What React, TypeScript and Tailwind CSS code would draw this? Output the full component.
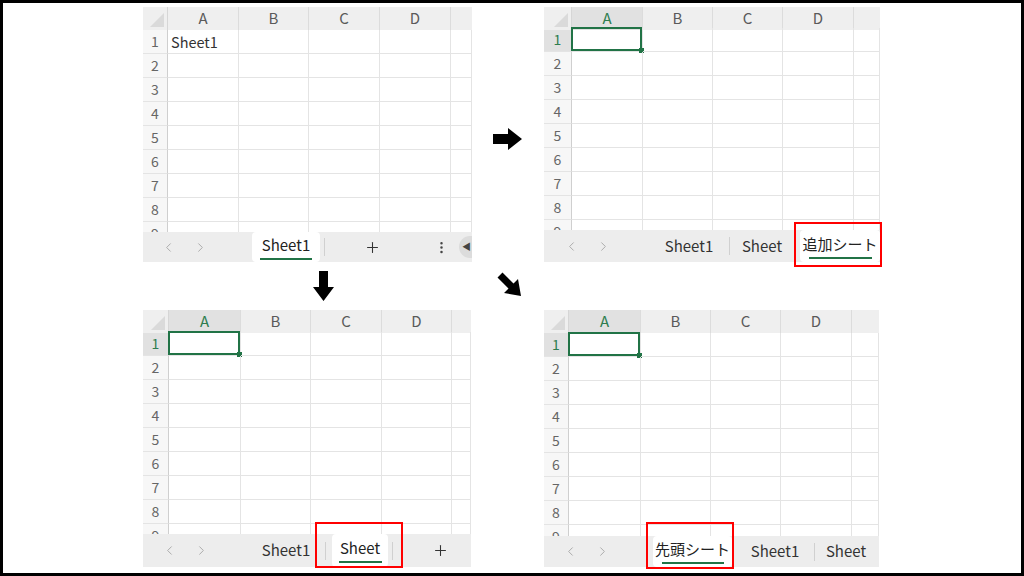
import React from 'react'
import { ChevronLeft, ChevronRight, Plus, EllipsisVertical } from 'lucide-react'

const GREEN = 'bg-[#217346]'

function Corner() {
  return (
    <div className="relative bg-[#efefef] border-r border-[#d6d6d6]">
      <svg className="absolute right-[3px] bottom-[3px]" width="14" height="14" viewBox="0 0 14 14">
        <polygon points="14,0 14,14 0,14" fill="#dadada" />
      </svg>
    </div>
  )
}

function Panel(props: {
  box: string
  cols: string
  headH: string
  gridH: string
  barH: string
  selected?: boolean
  a1?: string
  bar: React.ReactNode
  red?: string
}) {
  const { box, cols, headH, gridH, barH, selected, a1, bar, red } = props
  const letters = ['A', 'B', 'C', 'D']
  const rows = [1, 2, 3, 4, 5, 6, 7, 8, 9]

  return (
    <div className={`relative shrink-0 ${box}`}>
      <div className="flex flex-col w-full h-full overflow-hidden bg-white">
        <div className={`${gridH} overflow-hidden`}>
          <div className={`grid ${cols} ${headH} border-b border-[#d4d4d4]`}>
            <Corner />
            {letters.map((l, i) => (
              <div
                key={l}
                className={`flex items-center justify-center text-[15px] border-r border-[#dcdcdc] ${
                  selected && i === 0 ? 'bg-[#e1e1e1] text-[#2e7d4f]' : 'bg-[#efefef] text-[#5a5a5a]'
                }`}
              >
                {l}
              </div>
            ))}
            <div className="bg-[#efefef]" />
          </div>
          {rows.map((r) => (
            <div key={r} className={`grid ${cols} h-[24px]`}>
              <div
                className={`flex items-center justify-center text-[14px] border-r border-b border-r-[#cfcfcf] border-b-[#e4e4e4] ${
                  selected && r === 1 ? 'bg-[#e1e1e1] text-[#2e7d4f]' : 'bg-[#f7f7f7] text-[#666666]'
                }`}
              >
                {r}
              </div>
              {[0, 1, 2, 3, 4].map((c) => (
                <div key={c} className="relative border-r border-b border-[#e4e4e4] flex items-center">
                  {r === 1 && c === 0 && a1 ? (
                    <span className="pl-[3px] text-[14.5px] text-[#333333]">{a1}</span>
                  ) : null}
                  {r === 1 && c === 0 && selected ? (
                    <div className="absolute -left-px -top-px -right-0 -bottom-0 border-2 border-[#217346]">
                      <div className={`absolute -right-[4px] -bottom-[4px] w-[5px] h-[5px] ${GREEN}`} />
                    </div>
                  ) : null}
                </div>
              ))}
            </div>
          ))}
        </div>
        <div className={`${barH} bg-[#ededed] flex items-stretch`}>{bar}</div>
      </div>
      {red ? <div className={`absolute border-2 border-[#ff0000] ${red}`} /> : null}
    </div>
  )
}

function Nav(props: { pl: string }) {
  return (
    <div className={`flex items-center shrink-0 ${props.pl}`}>
      <div className="w-[32px] flex justify-center text-[#a8a8a8]">
        <ChevronLeft size={15} strokeWidth={1.5} />
      </div>
      <div className="w-[32px] flex justify-center text-[#a8a8a8]">
        <ChevronRight size={15} strokeWidth={1.5} />
      </div>
    </div>
  )
}

function Tab(props: { w: string; label: string }) {
  return (
    <div className={`${props.w} shrink-0 flex items-center justify-center text-[15px] text-[#333333]`}>
      {props.label}
    </div>
  )
}

function ActiveTab(props: { w: string; label: string; line: string }) {
  return (
    <div className={`${props.w} shrink-0 bg-white rounded-[4px] flex flex-col items-center justify-center`}>
      <span className="text-[15px] leading-[20px] text-[#222222]">{props.label}</span>
      <div className={`${props.line} h-[2px] mt-[3px] ${GREEN}`} />
    </div>
  )
}

function Sep() {
  return (
    <div className="flex items-center shrink-0">
      <div className="w-px h-[18px] bg-[#d0d0d0]" />
    </div>
  )
}

function ArrowRight() {
  return (
    <svg width="29" height="22" viewBox="0 0 29 22">
      <polygon points="0,6 15,6 15,0 29,11 15,22 15,16 0,16" fill="#000" />
    </svg>
  )
}

function ArrowDown() {
  return (
    <svg width="21" height="30" viewBox="0 0 21 30">
      <polygon points="6,0 15,0 15,16 21,16 10.5,30 0,16 6,16" fill="#000" />
    </svg>
  )
}

function ArrowDiag() {
  return (
    <svg width="25" height="25" viewBox="0 0 25 25">
      <polygon points="5.5,0.5 16.5,11.5 21,7 24,24 7,21 11.5,16.5 0.5,5.5" fill="#000" />
    </svg>
  )
}

export default function App() {
  return (
    <div className="w-[1024px] h-[576px] border-[3px] border-black bg-white overflow-hidden font-['Noto_Sans_CJK_JP',sans-serif]">
      <div className="flex items-start mt-[4px] ml-[140px]">
        <Panel
          box="w-[329px] h-[255px]"
          cols="grid-cols-[25px_71px_70px_71px_71px_1fr]"
          headH="h-[23px]"
          gridH="h-[225px]"
          barH="h-[30px]"
          a1="Sheet1"
          bar={
            <>
              <Nav pl="pl-[9px] w-[109px]" />
              <ActiveTab w="w-[68px]" label="Sheet1" line="w-[52px]" />
              <div className="w-[4px] shrink-0" />
              <Sep />
              <div className="w-[94px] shrink-0 flex items-center justify-center text-[#333333]">
                <Plus size={17} strokeWidth={1.5} />
              </div>
              <div className="w-[44px] shrink-0 flex items-center justify-center text-[#444444]">
                <EllipsisVertical size={15} strokeWidth={2} />
              </div>
              <div className="shrink-0 flex items-center -ml-[4px]">
                <div className="w-[24px] h-[22px] rounded-full bg-[#dcdcdc] flex items-center pl-[3px] text-[9px] text-[#444444]">
                  ◀
                </div>
              </div>
            </>
          }
        />
        <div className="w-[72px] shrink-0 pt-[121px] pl-[21px]">
          <ArrowRight />
        </div>
        <Panel
          box="w-[336px] h-[255px]"
          cols="grid-cols-[28px_71px_70px_70px_71px_1fr]"
          headH="h-[21px]"
          gridH="h-[223px]"
          barH="h-[32px]"
          selected
          red="left-[250px] top-[215px] w-[88px] h-[45px]"
          bar={
            <>
              <Nav pl="pl-[11px]" />
              <div className="w-[30px] shrink-0" />
              <Tab w="w-[80px]" label="Sheet1" />
              <Sep />
              <Tab w="w-[64px]" label="Sheet" />
              <div className="w-[6px] shrink-0" />
              <ActiveTab w="w-[80px]" label="追加シート" line="w-[63px]" />
            </>
          }
        />
      </div>

      <div className="flex items-start h-[48px]">
        <div className="ml-[310px] mt-[9px]">
          <ArrowDown />
        </div>
        <div className="ml-[163px] mt-[10px]">
          <ArrowDiag />
        </div>
      </div>

      <div className="flex items-start ml-[140px]">
        <Panel
          box="w-[328px] h-[257px]"
          cols="grid-cols-[26px_72px_70px_71px_70px_1fr]"
          headH="h-[22px]"
          gridH="h-[224px]"
          barH="h-[33px]"
          selected
          red="left-[172px] top-[212px] w-[88px] h-[46px]"
          bar={
            <>
              <Nav pl="pl-[10px]" />
              <div className="w-[30px] shrink-0" />
              <Tab w="w-[78px]" label="Sheet1" />
              <Sep />
              <div className="w-[6px] shrink-0" />
              <ActiveTab w="w-[56px]" label="Sheet" line="w-[43px]" />
              <div className="w-[4px] shrink-0" />
              <Sep />
              <div className="w-[94px] shrink-0 flex items-center justify-center text-[#333333]">
                <Plus size={17} strokeWidth={1.5} />
              </div>
            </>
          }
        />
        <div className="w-[73px] shrink-0" />
        <Panel
          box="w-[335px] h-[257px]"
          cols="grid-cols-[25px_72px_70px_70px_71px_1fr]"
          headH="h-[23px]"
          gridH="h-[226px]"
          barH="h-[31px]"
          selected
          red="left-[102px] top-[212px] w-[88px] h-[47px]"
          bar={
            <>
              <Nav pl="pl-[10px]" />
              <div className="w-[35px] shrink-0" />
              <ActiveTab w="w-[79px]" label="先頭シート" line="w-[62px]" />
              <div className="w-[4px] shrink-0" />
              <Tab w="w-[78px]" label="Sheet1" />
              <Sep />
              <Tab w="w-[62px]" label="Sheet" />
            </>
          }
        />
      </div>
    </div>
  )
}
